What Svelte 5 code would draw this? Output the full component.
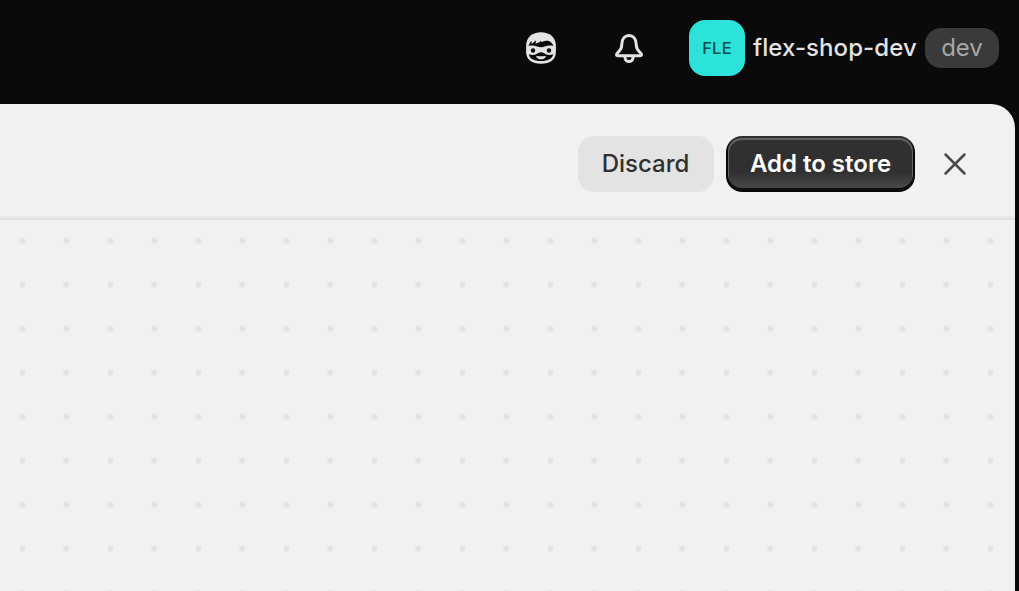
<script lang="ts">
  let store = { name: 'flex-shop-dev', initials: 'FLE', badge: 'dev' };
</script>

<div class="app">
  <header class="topbar">
    <button class="icon-btn" aria-label="Sidekick">
      <svg width="32" height="34" viewBox="0 0 32 34" fill="none">
        <path d="M16 1.3C7.500 1.300 1.100 6 1.100 15v5.800C1.100 28.800 6.800 32.700 16 32.700s14.900-3.900 14.900-11.900V15C30.900 6 24.500 1.300 16 1.300Z" fill="#e3e3e3" />
        <path d="M3.600 14.900c.5-2 1.600-3.700 3-5l.1 3 4.500-3.600-.7 3.100c2.500-.3 4.300-1.400 5.300-2.700.2 1.200.9 1.500 2.200.9 2.500-1.300 6-1 7.800.6 1.300 1 2.200 2.300 2.600 3.700-3.500-.6-6.400-.3-8.600.7-2.300.9-5.300.9-7.600 0-2.200-1-5.100-1.300-8.600-.7Z" fill="#0a0a0a" />
        <circle cx="8" cy="19.500" r="2.200" fill="#0a0a0a" />
        <circle cx="24" cy="19.500" r="2.200" fill="#0a0a0a" />
        <path d="M3.800 23.300c4.200 1.300 7.200.5 9.300-1.300.8-.6 1.700-.8 2.900-.8s2.100.2 2.900.8c2.100 1.800 5.100 2.600 9.300 1.300-.9 4.500-5 6.800-12.200 6.800S4.700 27.800 3.800 23.300Z" fill="#0a0a0a" />
        <path d="M12 24.900c2.600.6 5.400.6 8 0 .7-.1 1 .4.600 1-.9 1.600-2.600 2.400-4.600 2.400s-3.700-.8-4.600-2.400c-.4-.6-.1-1.100.6-1Z" fill="#e3e3e3" />
      </svg>
    </button>
    <button class="icon-btn" aria-label="Notifications">
      <svg width="32" height="34" viewBox="0 0 32 34" fill="none" stroke="#e3e3e3" stroke-width="3" stroke-linejoin="round">
        <path d="M8.800 13.200C9 7.800 12 4.500 16 4.500s7 3.300 7.200 8.700c.1 3.400.6 4.900 2.600 6.900 1.400 1.400 2.700 2.200 2.700 3.400 0 .9-.6 1.300-1.600 1.300H5.100c-1 0-1.600-.4-1.600-1.300 0-1.200 1.300-2 2.700-3.400 2-2 2.500-3.500 2.600-6.900Z" />
        <path d="M12 25v1.600a4 4 0 0 0 8 0V25" />
      </svg>
    </button>
    <div class="store">
      <span class="avatar">{store.initials}</span>
      <span class="store-name">{store.name}</span>
      <span class="badge">{store.badge}</span>
    </div>
  </header>

  <main class="frame">
    <div class="actions">
      <button class="btn discard">Discard</button>
      <button class="btn primary">Add to store</button>
      <button class="close" aria-label="Close">
        <svg width="24" height="24" viewBox="0 0 24 24" fill="none" stroke="#4a4a4a" stroke-width="2.500" stroke-linecap="round">
          <path d="M2.500 2.500l19 19M21.500 2.500l-19 19" />
        </svg>
      </button>
    </div>
    <div class="canvas"></div>
  </main>
</div>

<style>
  :global(body) {
    background: #0a0a0a;
    overflow: hidden;
  }

  .app {
    display: flex;
    flex-direction: column;
    height: 100vh;
    font-family: 'Inter', sans-serif;
  }

  button {
    margin: 0;
    padding: 0;
    border: 0;
    background: none;
    font: inherit;
  }

  .topbar {
    display: flex;
    align-items: center;
    justify-content: flex-end;
    box-sizing: border-box;
    flex: 0 0 104px;
    padding: 0 20px 8px 0;
  }

  .icon-btn {
    display: flex;
    align-items: center;
    justify-content: center;
    width: 88px;
    height: 56px;
  }

  .store {
    display: flex;
    align-items: center;
    gap: 8px;
    margin-left: 16px;
  }

  .avatar {
    display: flex;
    align-items: center;
    justify-content: center;
    width: 56px;
    height: 56px;
    border-radius: 16px;
    background: #2ce3d9;
    color: #09504c;
    font-size: 16.5px;
    font-weight: 450;
    letter-spacing: 0.2px;
  }

  .store-name {
    width: 164px;
    color: #e3e3e3;
    font-size: 24px;
    font-weight: 450;
    line-height: 40px;
    letter-spacing: 0.08px;
    white-space: nowrap;
  }

  .badge {
    box-sizing: border-box;
    width: 74px;
    height: 40px;
    border-radius: 16px;
    background: #3a3a3a;
    color: #a6a6a6;
    font-size: 24px;
    line-height: 40px;
    text-align: center;
  }

  .frame {
    display: flex;
    flex-direction: column;
    flex: 1;
    margin-right: 4px;
    border-top-right-radius: 24px;
    background: #f1f1f1;
    overflow: hidden;
  }

  .actions {
    display: flex;
    align-items: center;
    justify-content: flex-end;
    gap: 12px;
    box-sizing: border-box;
    flex: 0 0 116px;
    padding: 6px 32px 0 0;
    border-bottom: 2px solid #e1e1e1;
    box-shadow: inset 0 -2px 0 #eaeaea;
  }

  .btn {
    height: 56px;
    padding-bottom: 1px;
    border-radius: 16px;
    font-size: 24px;
    font-weight: 500;
  }

  .discard {
    width: 136px;
    padding-right: 1px;
    background: #e3e3e3;
    color: #303030;
  }

  .primary {
    width: 189px;
    background: linear-gradient(180deg, rgba(48, 48, 48, 0) 63.5%, rgba(255, 255, 255, 0.15) 100%), #303030;
    box-shadow:
      inset 0 -2px 0 2px rgba(0, 0, 0, 0.8),
      inset 0 0 0 2px #303030,
      inset 0 1px 0 3px rgba(255, 255, 255, 0.25);
    color: #fff;
    font-weight: 600;
  }

  .close {
    display: flex;
    align-items: center;
    justify-content: center;
    width: 56px;
    height: 56px;
  }

  .canvas {
    flex: 1;
    background-image: radial-gradient(circle at center, #e3e3e3 2.700px, transparent 3.500px);
    background-position: 0.300px -1.300px;
    background-size: 44px 44px;
  }
</style>
